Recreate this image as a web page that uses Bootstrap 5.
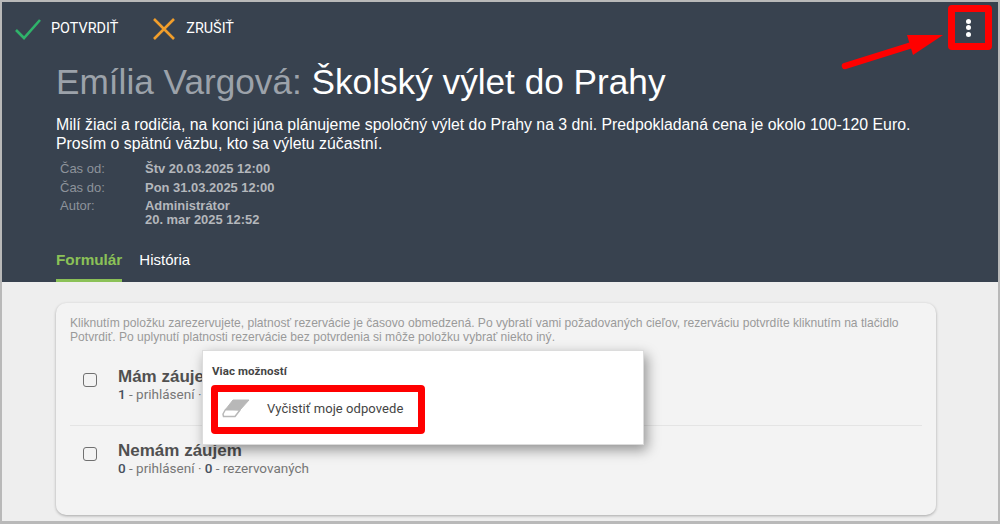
<!DOCTYPE html>
<html lang="sk">
<head>
<meta charset="utf-8">
<title>Školský výlet do Prahy</title>
<link href="https://cdn.jsdelivr.net/npm/bootstrap@5.3.0/dist/css/bootstrap.min.css" rel="stylesheet">
<style>
html,body{height:100%;overflow:hidden}
body{font-family:"Liberation Sans",Arial,sans-serif;background:#eee;color:#444}
.frame{width:1000px;height:524px;border:2px solid #b9b9b9;border-bottom-width:3px;position:relative;overflow:hidden;background:#eee}
.head{background:#38424f;height:280px;padding-left:54px;color:#fff;position:relative}
.tools{height:54px;margin-left:-54px;padding-left:12px;gap:34px}
.tool{font-family:Roboto,sans-serif;font-size:14.4px;color:#fff;gap:9px}
.tool svg.wide{margin-right:1px}
.ttl{font-size:35.200px;font-weight:400;line-height:40px;margin:6px 0 0;height:40px}
.ttl span{color:#9ca2aa}
.desc{font-size:15.84px;line-height:19px;margin:13px 0 0;width:870px}
.meta{font-size:13px;line-height:14px;margin-top:9px;margin-left:4px;display:grid;grid-template-columns:85px 1fr;row-gap:4.500px}
.meta b{font-weight:700;color:#b4b7bc;font-size:12.950px}
.meta i{font-style:normal;color:#8d939b;font-weight:400}
.tabs{margin-top:23px;gap:17px;font-size:15px;height:32px;line-height:20px}
.tabs a{color:#fff;text-decoration:none;height:32px;display:block}
.tabs a.on{color:#8bc157;font-weight:700;font-size:15.300px;border-bottom:3px solid #8bc157}
.sheet{margin:21px 0 0 54px;width:880px;height:212px;background:#f3f3f3;border-radius:10px;box-shadow:0 1px 3px rgba(0,0,0,.3);padding:13px 14px}
.hint{font-size:12.100px;line-height:14px;color:#9a9a9a;margin:0}
.optlist{margin-top:23px}
.opt{gap:21px;height:58px;align-items:flex-start}
.opt+.opt{border-top:1px solid #e4e4e4;padding-top:15px;height:70px}
.box{width:14px;height:14px;border:1.500px solid #707070;border-radius:3px;margin:6px 0 0 13px;flex:none}
.otitle{font-size:17px;font-weight:700;line-height:19px;color:#505050}
.osub{font-family:Roboto,sans-serif;font-size:13.500px;line-height:16px;color:#777}
.osub b{font-weight:500;color:#46505e}
.pop{position:absolute;left:200px;top:348px;width:442px;height:95px;background:#fff;border:1px solid #dcdcdc;box-shadow:3px 5px 12px rgba(0,0,0,.4);padding:13px 9px}
.ptitle{font-family:Roboto,sans-serif;font-size:11.500px;font-weight:700;color:#444;line-height:14px;letter-spacing:.1px}
.pitem{font-family:Roboto,sans-serif;font-size:13px;color:#444;margin-top:21px;gap:16px;padding-left:10px;letter-spacing:.07px}
.more{left:964px;top:16.500px;gap:1.800px}
.dot{width:5px;height:5px;border-radius:50%;background:#fff;display:block}
.mark1{position:absolute;border:7px solid #f00;border-radius:4px}
.m1{left:946px;top:3px;width:44px;height:45px}
.m2{left:209px;top:383px;width:214px;height:49px}
.arrow{position:absolute;left:838px;top:30px}
</style>
</head>
<body>
<div class="frame">
  <div class="head">
    <div class="tools d-flex align-items-center">
      <a class="tool d-flex align-items-center text-decoration-none">
        <svg width="28" height="22" viewBox="0 0 28 22"><path d="M2 12l8 8L26 2" fill="none" stroke="#2fb36a" stroke-width="2.600"/></svg>POTVRDIŤ</a>
      <a class="tool d-flex align-items-center text-decoration-none">
        <svg class="wide" width="24" height="22" viewBox="0 0 24 22"><path d="M2 1l20 20M22 1L2 21" fill="none" stroke="#f19e2b" stroke-width="2.600"/></svg>ZRUŠIŤ</a>
    </div>
    <h1 class="ttl"><span>Emília Vargová:</span> Školský výlet do Prahy</h1>
    <p class="desc">Milí žiaci a rodičia, na konci júna plánujeme spoločný výlet do Prahy na 3 dni. Predpokladaná cena je okolo 100-120 Euro. Prosím o spätnú väzbu, kto sa výletu zúčastní.</p>
    <div class="meta">
      <i>Čas od:</i><b>Štv 20.03.2025 12:00</b>
      <i>Čas do:</i><b>Pon 31.03.2025 12:00</b>
      <i>Autor:</i><b>Administrátor<br>20. mar 2025 12:52</b>
    </div>
    <nav class="tabs d-flex">
      <a class="on" href="#">Formulár</a>
      <a href="#">História</a>
    </nav>
  </div>
  <div class="sheet">
    <p class="hint">Kliknutím položku zarezervujete, platnosť rezervácie je časovo obmedzená. Po vybratí vami požadovaných cieľov, rezerváciu potvrdíte kliknutím na tlačidlo Potvrdiť. Po uplynutí platnosti rezervácie bez potvrdenia si môže položku vybrať niekto iný.</p>
    <div class="optlist">
      <div class="opt d-flex">
        <span class="box"></span>
        <div><div class="otitle">Mám záujem</div><div class="osub"><b>1</b> - prihlásení · <b>0</b> - rezervovaných</div></div>
      </div>
      <div class="opt d-flex">
        <span class="box"></span>
        <div><div class="otitle">Nemám záujem</div><div class="osub"><b>0</b> - prihlásení · <b>0</b> - rezervovaných</div></div>
      </div>
    </div>
  </div>
  <div class="pop">
    <div class="ptitle">Viac možností</div>
    <div class="pitem d-flex align-items-center">
      <svg width="29" height="20" viewBox="0 0 29 20"><path d="M3.500 10.500L11 1h16l-9 10z" fill="#b8b8b8" stroke="#b8b8b8" stroke-linejoin="round"/><path d="M3.500 10.500L18 11l-5 6.500H1.500L1 15z" fill="#fff" stroke="#b8b8b8" stroke-width="1.500" stroke-linejoin="round"/></svg>
      <span>Vyčistiť moje odpovede</span>
    </div>
  </div>
  <button class="more btn p-0 border-0 position-absolute d-flex flex-column align-items-center" aria-label="Viac">
    <span class="dot"></span><span class="dot"></span><span class="dot"></span>
  </button>
  <div class="mark1 m1"></div>
  <div class="mark1 m2"></div>
  <svg class="arrow" width="110" height="45" viewBox="0 0 110 45"><path d="M5 34L72 13" stroke="#f00" stroke-width="6.500" stroke-linecap="round"/><path d="M67 3L103 3L73 23z" fill="#f00"/></svg>
</div>
</body>
</html>
